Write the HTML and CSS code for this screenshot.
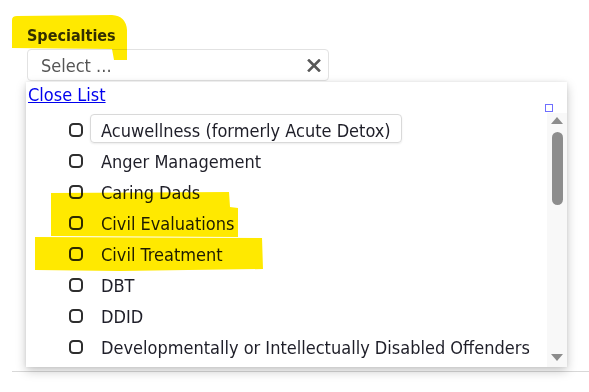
FILE: index.html
```html
<!DOCTYPE html>
<html lang="en">
<head>
  <meta charset="UTF-8">
  <title>Specialties</title>
  <link rel="stylesheet" href="styles.css">
</head>
<body>
  <div class="page">
    <div class="field">
      <label class="field-label">Specialties</label>
      <div class="select">
        <span class="select-value">Select ...</span>
        <svg class="select-clear" width="14" height="13" viewBox="0 0 14 13">
          <path d="M2 1.5 L12 11.5 M12 1.5 L2 11.5" stroke="#585858" stroke-width="2.6" stroke-linecap="square"/>
        </svg>
      </div>

      <div class="dropdown">
        <div class="dropdown-head">
          <a href="#" class="close-link">Close List</a>
          <span class="resize-box"></span>
        </div>
        <div class="dropdown-body">
          <ul class="options">
            <li class="option"><input type="checkbox"><span class="option-text focused">Acuwellness (formerly Acute Detox)</span></li>
            <li class="option"><input type="checkbox"><span class="option-text">Anger Management</span></li>
            <li class="option"><input type="checkbox"><span class="option-text">Caring Dads</span></li>
            <li class="option"><input type="checkbox"><span class="option-text">Civil Evaluations</span></li>
            <li class="option"><input type="checkbox"><span class="option-text">Civil Treatment</span></li>
            <li class="option"><input type="checkbox"><span class="option-text">DBT</span></li>
            <li class="option"><input type="checkbox"><span class="option-text">DDID</span></li>
            <li class="option"><input type="checkbox"><span class="option-text">Developmentally or Intellectually Disabled Offenders</span></li>
          </ul>
          <div class="scrollbar">
            <span class="arrow-up"></span>
            <span class="thumb"></span>
            <span class="arrow-down"></span>
          </div>
        </div>
      </div>
    </div>
    <div class="rule"></div>

    <!-- marker highlights drawn over the screenshot -->
    <svg class="marker" width="589" height="392" viewBox="0 0 589 392">
      <path d="M12 20 Q12 16 17 16 L112 15 Q126 16 127 30 L127 60 L114 60 L112 49 L12 48 Z"/>
      <path d="M51 193 L229 192 L230 207 L238 208 L238 237 L51 236 Z"/>
      <path d="M35 237 L262 238 L263 269 L120 271 L35 270 Z"/>
    </svg>
  </div>
</body>
</html>
```

FILE: styles.css
```css
body {
  margin: 0;
  background: #fff;
  font-family: 'DejaVu Sans Condensed', 'DejaVu Sans', sans-serif;
  font-stretch: condensed;
  color: #222;
}
.page {
  position: relative;
  width: 589px;
  height: 392px;
  overflow: hidden;
  padding-left: 12px;
  box-sizing: border-box;
}
.field {
  position: relative;
  margin-left: 15px;
  padding-top: 26px;
}
.field-label {
  display: block;
  margin-bottom: 3px;
  font-size: 16px;
  font-weight: bold;
  line-height: 20px;
  color: #333;
}
.select {
  display: flex;
  align-items: center;
  justify-content: space-between;
  width: 302px;
  height: 32px;
  padding: 0 7px 0 13px;
  border: 1px solid #e2e2e2;
  border-radius: 4px;
  box-sizing: border-box;
}
.select-value {
  font-size: 18px;
  color: #555;
}
.dropdown {
  position: absolute;
  top: 82px;
  left: -1px;
  width: 541px;
  height: 285px;
  background: #fff;
  box-shadow: 0 4px 10px rgba(0, 0, 0, 0.22), 0 0 3px rgba(0, 0, 0, 0.08);
  display: flex;
  flex-direction: column;
}
.dropdown-head {
  display: flex;
  justify-content: space-between;
  height: 31px;
  padding: 2px 14px 0 2px;
  box-sizing: border-box;
}
.close-link {
  font-size: 18px;
  line-height: 22px;
  height: 22px;
  color: #0000ee;
  text-decoration: underline;
}
.resize-box {
  align-self: flex-end;
  width: 8px;
  height: 8px;
  margin-bottom: 1px;
  border: 1.5px solid #6f6fff;
  box-sizing: border-box;
}
.dropdown-body {
  display: flex;
  flex: 1;
  min-height: 0;
}
.options {
  flex: 1;
  margin: 0;
  padding: 0;
  list-style: none;
  overflow: hidden;
}
.option {
  display: flex;
  align-items: center;
  height: 31px;
  padding-left: 43px;
}
.option input {
  appearance: none;
  width: 14px;
  height: 14px;
  margin: 3px 7px 0 0;
  border: 2px solid #2e2e2e;
  border-radius: 4.5px;
  box-sizing: border-box;
}
.option-text {
  height: 29px;
  padding: 5px 10px 0;
  border: 1px solid transparent;
  border-radius: 4px;
  box-sizing: border-box;
  font-size: 18px;
  line-height: 22px;
  white-space: nowrap;
  color: #1e1e28;
}
.option-text.focused {
  border-color: #d9d9d9;
  box-shadow: 0 1px 2px rgba(0, 0, 0, 0.08);
}
.scrollbar {
  display: flex;
  flex-direction: column;
  align-items: center;
  width: 20px;
  background: #f8f8f8;
}
.arrow-up {
  margin-top: 4px;
  border-left: 6px solid transparent;
  border-right: 6px solid transparent;
  border-bottom: 7px solid #8c8c8c;
}
.thumb {
  width: 11px;
  height: 73px;
  margin-top: 8px;
  border-radius: 6px;
  background: #8d8d8d;
}
.arrow-down {
  margin-top: auto;
  margin-bottom: 6px;
  border-left: 6px solid transparent;
  border-right: 6px solid transparent;
  border-top: 7px solid #8c8c8c;
}
.rule {
  margin-top: 290px;
  height: 1px;
  background: #d8d8d8;
}
.marker {
  position: absolute;
  top: 0;
  left: 0;
  pointer-events: none;
  mix-blend-mode: multiply;
}
.marker path {
  fill: #ffe900;
}
```
